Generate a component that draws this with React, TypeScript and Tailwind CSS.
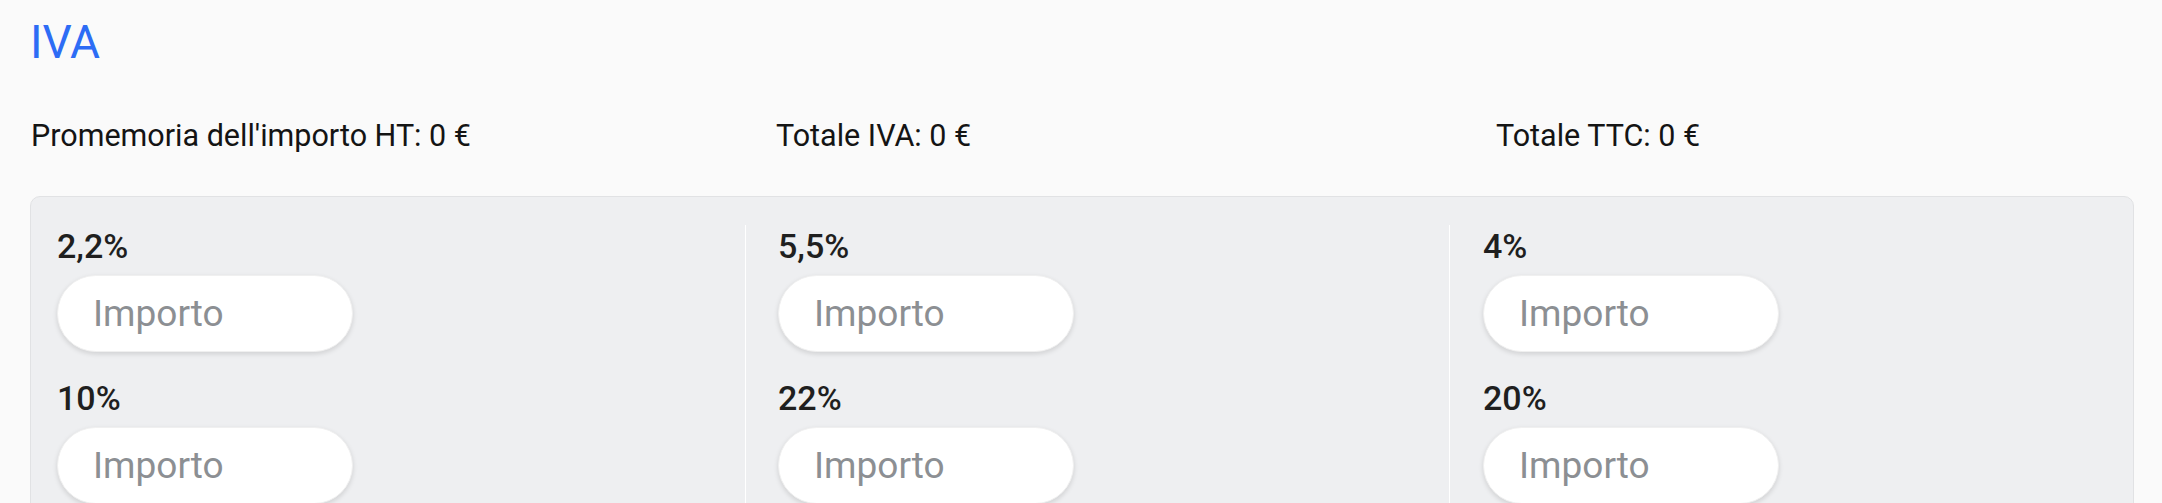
import React from "react";

const rows: string[][] = [
  ["2,2%", "10%"],
  ["5,5%", "22%"],
  ["4%", "20%"],
];

function Field({ label, first }: { label: string; first: boolean }) {
  return (
    <div className={first ? "" : "mt-[25px]"}>
      <div className="text-[34px] leading-[42px] font-medium text-[#1f1f1f]">{label}</div>
      <input
        type="text"
        placeholder="Importo"
        className="mt-[8px] block h-[77px] w-[296px] rounded-full bg-white pl-[35px] pr-4 text-[37px] text-[#222] placeholder:text-[#8c8f93] outline-none shadow-[0_2px_5px_rgba(0,0,0,0.13)] border border-[#f0f0f0]"
        style={{ fontFamily: "Roboto, 'Noto Sans', sans-serif" }}
      />
    </div>
  );
}

export default function App() {
  return (
    <div
      className="min-h-[503px] bg-[#fafafa] pl-[30px] pr-[28px] pt-[15px]"
      style={{ fontFamily: "Roboto, 'Noto Sans', sans-serif" }}
    >
      <h1 className="text-[46px] leading-[54px] font-normal text-[#2d6cf5]">IVA</h1>
      <div className="mt-[49px] grid grid-cols-[746px_720px_1fr] text-[30.5px] leading-[36px] text-[#141414]">
        <div className="pl-[1px]">Promemoria dell'importo HT: 0 €</div>
        <div>Totale IVA: 0 €</div>
        <div>Totale TTC: 0 €</div>
      </div>
      <div className="mt-[42px] rounded-[10px] border border-[#e1e2e4] bg-[#eeeff1] pl-[26px] pt-[28px] pb-[30px]">
        <div className="flex">
          <div className="w-[688px]">
            {rows[0].map((l, i) => (
              <Field key={l} label={l} first={i === 0} />
            ))}
          </div>
          <div className="w-[704px] border-l border-white pl-[32px]">
            {rows[1].map((l, i) => (
              <Field key={l} label={l} first={i === 0} />
            ))}
          </div>
          <div className="flex-1 border-l border-white pl-[33px]">
            {rows[2].map((l, i) => (
              <Field key={l} label={l} first={i === 0} />
            ))}
          </div>
        </div>
      </div>
    </div>
  );
}
